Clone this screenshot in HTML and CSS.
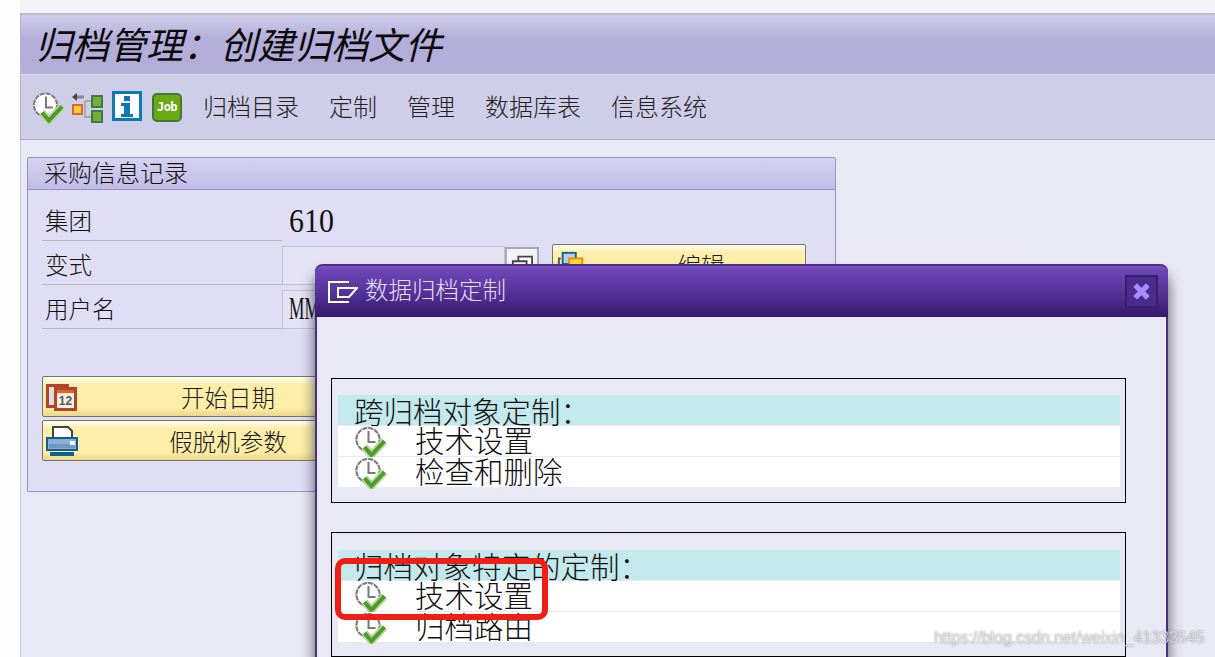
FILE: index.html
```html
<!DOCTYPE html>
<html lang="zh">
<head>
<meta charset="utf-8">
<title>归档管理：创建归档文件</title>
<link rel="stylesheet" href="styles.css">
</head>
<body>
<svg class="defs" width="0" height="0" aria-hidden="true">
  <symbol id="clock" viewBox="0 0 32 32">
    <circle cx="13.500" cy="13.500" r="12.500" fill="#fff" stroke="#c8c8cc" stroke-width="1"/>
    <circle cx="13.500" cy="13.500" r="11.500" fill="#fff" stroke="#7c7c80" stroke-width="2" stroke-dasharray="5 1"/>
    <path d="M14 5v12M14 16h7" fill="none" stroke="#77777c" stroke-width="2"/>
    <path d="M10 21l7 8 13-14" fill="none" stroke="#b4d894" stroke-width="7.500"/>
    <path d="M10 21l7 8 13-14" fill="none" stroke="#4f9a2e" stroke-width="4"/>
  </symbol>
</svg>
<div class="app">
  <div class="topstrip"></div>
  <header class="titlebar"><h1>归档管理：创建归档文件</h1></header>
  <nav class="toolbar">
    <svg class="tool tool-clock"><use href="#clock"/></svg>
    <svg class="tool tool-tree" viewBox="0 0 32 32">
      <path d="M13 6H5" stroke="#888" stroke-width="3" fill="none"/><path d="M1 6l5-4v8z" fill="#444"/>
      <path d="M14 10v16h7M14 10h7" stroke="#aaa" stroke-width="2" fill="none"/>
      <rect x="2" y="14" width="9" height="9" fill="#fc3" stroke="#e0662c" stroke-width="2"/>
      <rect x="21" y="5" width="10" height="11" fill="#74b032" stroke="#3f7a4a" stroke-width="2"/>
      <rect x="21" y="20" width="10" height="11" fill="#74b032" stroke="#3f7a4a" stroke-width="2"/>
    </svg>
    <svg class="tool tool-info" viewBox="0 0 30 30">
      <rect x="1.500" y="1.500" width="27" height="27" fill="#fff" stroke="#0d7ab8" stroke-width="3"/>
      <path d="M12 5h6v5h-6zM9 12h9v11h3v3H9v-3h3v-8H9z" fill="#0d7ab8"/>
    </svg>
    <div class="jobicon">Job</div>
    <ul class="menu">
      <li>归档目录</li><li>定制</li><li>管理</li><li>数据库表</li><li>信息系统</li>
    </ul>
  </nav>
  <main class="main">
    <section class="panel">
      <h2 class="panel-head">采购信息记录</h2>
      <div class="panel-body">
        <div class="row"><span class="label">集团</span><span class="value">610</span></div>
        <div class="row">
          <span class="label">变式</span><span class="input"></span>
          <span class="f4"><svg viewBox="0 0 24 18"><path d="M8 1h15v11H8z" fill="#fff" stroke="#444" stroke-width="2"/><path d="M2 6h15v11H2z" fill="#fff" stroke="#444" stroke-width="2"/></svg></span>
          <div class="btn btn-edit">
            <svg class="btn-icon" viewBox="0 0 32 32"><path d="M4 9H2v20" stroke="#555" stroke-width="2" fill="none"/><rect x="6" y="3" width="14" height="12" fill="#b8cfe8" stroke="#0f5f8f" stroke-width="2"/><rect x="13" y="9" width="14" height="12" fill="#fd3" stroke="#f08a00" stroke-width="2"/></svg>
            <span>编辑</span>
          </div>
        </div>
        <div class="row"><span class="label">用户名</span><span class="input"><span class="input-text">MM</span></span></div>
        <div class="btn btn-wide btn-first">
          <svg class="btn-icon" viewBox="0 0 32 26">
            <rect x="1.500" y="1.500" width="20" height="21" fill="#ddd" stroke="#b0432a" stroke-width="3"/>
            <rect x="9.500" y="4.500" width="20" height="21" fill="#f4f0e8" stroke="#b0432a" stroke-width="3"/>
            <rect x="11" y="6" width="17" height="3" fill="#e8641e"/>
            <text x="19.500" y="21" class="cal">12</text>
          </svg>
          <span>开始日期</span>
        </div>
        <div class="btn btn-wide">
          <svg class="btn-icon" viewBox="0 0 32 30">
            <path d="M7 1h15l4 4v7H7z" fill="#fff" stroke="#444" stroke-width="2"/>
            <rect x="1" y="12" width="30" height="12" fill="#8ab0d8" stroke="#0f5f8f" stroke-width="2"/>
            <rect x="3" y="18" width="26" height="4" fill="#6d97c4"/>
            <rect x="24" y="15" width="5" height="4" fill="#fff"/>
            <rect x="4" y="26" width="24" height="4" fill="#0f5f8f"/>
          </svg>
          <span>假脱机参数</span>
        </div>
      </div>
    </section>
  </main>
</div>

<div class="dialog">
  <header class="dialog-title">
    <svg class="dialog-icon" viewBox="0 0 30 22"><path d="M21 1H1v20h20M10 7h19l-8 9H10z" fill="none" stroke="#fff" stroke-width="2"/></svg>
    <span class="dialog-name">数据归档定制</span>
    <span class="close"><svg viewBox="0 0 18 18"><path d="M3 3l12 12M15 3L3 15" stroke="#a98cff" stroke-width="5"/></svg></span>
  </header>
  <div class="dialog-body">
    <section class="group">
      <div class="group-head">跨归档对象定制：</div>
      <div class="group-row"><svg class="row-icon"><use href="#clock"/></svg><span class="row-text">技术设置</span></div>
      <div class="group-row"><svg class="row-icon"><use href="#clock"/></svg><span class="row-text">检查和删除</span></div>
    </section>
    <section class="group group-second">
      <div class="group-head">归档对象特定的定制：</div>
      <div class="group-row"><svg class="row-icon"><use href="#clock"/></svg><span class="row-text">技术设置</span></div>
      <div class="group-row"><svg class="row-icon"><use href="#clock"/></svg><span class="row-text">归档路由</span></div>
    </section>
  </div>
</div>
<div class="redmark"></div>
<div class="watermark">https://blog.csdn.net/weixin_41333545</div>
</body>
</html>
```
FILE: styles.css
```css
* { box-sizing: border-box; }
html, body { margin: 0; padding: 0; width: 1215px; height: 657px; overflow: hidden; }
body {
  position: relative;
  background: #fefefe;
  color: #111;
  font-family: "Noto Sans CJK SC", "Liberation Serif", sans-serif;
  font-weight: 300;
}
.defs { position: absolute; }
.app { margin-left: 20px; height: 657px; display: flex; flex-direction: column; }
.topstrip { height: 13px; background: #f4f3fa; }
.titlebar {
  height: 62px;
  border-top: 2px solid #bdb8d0;
  border-left: 1px solid #b5b0cc;
  border-bottom: 1px solid #e0def0;
  background: linear-gradient(#d0cdea 0, #b4aeda 24px, #b2acd9 100%);
  display: flex;
  align-items: center;
  padding: 0 0 4px 14px;
}
.titlebar h1 {
  margin: 0;
  font-size: 37px;
  line-height: 50px;
  font-style: italic;
  font-weight: 400;
  color: #0a0a0a;
  white-space: nowrap;
}
.toolbar {
  height: 65px;
  border-left: 1px solid #b5b0cc;
  border-bottom: 1px solid #aaa8c8;
  background: #cfcee9;
  display: flex;
  align-items: flex-start;
  padding: 16px 0 0 11px;
}
.tool { display: block; flex: none; }
.tool-clock { width: 32px; height: 33px; }
.tool-tree { width: 32px; height: 32px; margin-left: 7px; }
.tool-info { width: 30px; height: 30px; margin-left: 9px; }
.jobicon {
  width: 30px; height: 29px;
  margin: 2px 0 0 10px;
  background: #6aa814;
  border: 2px solid #3f7a3a;
  border-radius: 5px;
  color: #fff;
  font: 700 12px/25px "DejaVu Sans Mono", monospace;
  text-align: center;
  letter-spacing: -.5px;
  flex: none;
}
.menu {
  list-style: none;
  margin: -1px 0 0 21px;
  padding: 0;
  display: flex;
  gap: 30px;
  font-size: 24px;
  line-height: 32px;
  color: #222;
  white-space: nowrap;
}
.main { flex: 1; background: #e9e9f5; border-left: 1px solid #c8c6de; padding: 17px 0 0 6px; }
.panel {
  width: 809px;
  height: 335px;
  border: 1px solid #9a90c8;
  background: #e0def4;
  border-radius: 2px 2px 0 0;
}
.panel-head {
  margin: 0;
  height: 32px;
  border-bottom: 1px solid #9a90c8;
  background: linear-gradient(#d6d2f0, #c0bce6);
  font-size: 24px;
  font-weight: 300;
  line-height: 28px;
  padding-left: 16px;
}
.panel-body { padding: 7px 0 0 14px; }
.row { height: 44px; display: flex; align-items: flex-end; }
.label {
  width: 240px;
  height: 44px;
  flex: none;
  padding-left: 3px;
  border-bottom: 1px solid #b8b8c0;
  font-size: 23.500px;
  line-height: 46px;
}
.value {
  align-self: stretch;
  padding-left: 8px;
  font: 34px/48px "Liberation Serif", serif;
  transform: scaleX(.88);
  transform-origin: left;
}
.input {
  width: 223px;
  height: 39px;
  flex: none;
  border: 1px solid #c2c2cc;
  background: #e4e2f4;
  padding-left: 6px;
}
.input-text {
  display: inline-block;
  font: 31px/36px "Liberation Serif", serif;
  transform: scaleX(.56);
  transform-origin: left;
}
.f4 {
  width: 34px;
  height: 38px;
  flex: none;
  border: 2px solid #a8a8b4;
  background: #f2f2fa;
  padding: 6px 4px;
}
.f4 svg { display: block; width: 22px; height: 18px; }
.btn {
  display: grid;
  grid-template-columns: 36px 1fr 36px;
  align-items: center;
  height: 41px;
  border: 1px solid #77746a;
  border-radius: 2px;
  background: linear-gradient(#fffef2 0, #fdeeaa 20%, #fdeea8 80%, #ecd688 100%);
  font-size: 23.500px;
  line-height: 36px;
  color: #1a1a1a;
  text-align: center;
  white-space: nowrap;
}
.btn span { grid-column: 2; }
.btn-icon { display: block; width: 32px; height: 30px; margin-left: 3px; }
.btn-edit { width: 254px; margin: 0 0 0 13px; flex: none; }
.btn-edit span { padding-left: 44px; }
.btn-wide { width: 372px; margin-top: 3px; }
.btn-first { margin-top: 47px; }
.cal { font: 700 12px "Liberation Sans", sans-serif; fill: #555; text-anchor: middle; }

.dialog {
  position: absolute;
  left: 315px;
  top: 264px;
  width: 853px;
  height: 393px;
  border: 2px solid #4a2f85;
  border-top: 0;
  border-bottom: 0;
  border-radius: 8px 8px 0 0;
  background: #e9e9f5;
  box-shadow: 0 12px 14px rgba(30, 30, 50, .75);
  overflow: visible;
}
.dialog-title {
  height: 53px;
  margin: 0 -2px;
  border-top: 2px solid #4a2f85;
  border-radius: 8px 8px 0 0;
  background: linear-gradient(#7c54c4 0, #6d45b5 4px, #5a389f 22px, #3a1c73 48px, #351a6b 100%);
  display: flex;
  align-items: center;
  padding: 0 10px 0 13px;
  color: #e6def8;
}
.dialog-icon { width: 30px; height: 22px; flex: none; }
.dialog-name { margin: 0 0 5px 7px; font-size: 23.500px; line-height: 40px; flex: 1; }
.close {
  width: 33px; height: 33px;
  border: 2px solid #37206c;
  background: #4a2c8c;
  padding: 5px;
  flex: none;
}
.close svg { display: block; width: 19px; height: 19px; }
.dialog-body { padding: 61px 0 0 14px; }
.group {
  width: 795px;
  height: 125px;
  border: 1px solid #000;
  padding: 16px 5px 0 6px;
  display: flex;
  flex-direction: column;
  gap: 1px;
  font-size: 29.500px;
}
.group-second { margin-top: 29px; padding-top: 17px; }
.group-head {
  height: 30px;
  background: #c3e9ec;
  padding-left: 16px;
  line-height: 30px;
  white-space: nowrap;
}
.group-row {
  height: 30px;
  background: #fff;
  padding-left: 16px;
  display: flex;
  align-items: flex-start;
  gap: 28px;
}
.row-text { line-height: 28px; margin-top: -1px; }
.row-icon { width: 33px; height: 32px; flex: none; }
.redmark {
  position: absolute;
  left: 335px;
  top: 558px;
  width: 213px;
  height: 62px;
  border: 6px solid #f01e14;
  border-radius: 10px;
}
.watermark {
  position: absolute;
  left: 934px;
  top: 627px;
  font: 15.900px/22px "Liberation Sans", sans-serif;
  color: rgba(255, 255, 255, .6);
  text-shadow: 0 0 2px rgba(100, 100, 110, .8);
  white-space: nowrap;
}
```
